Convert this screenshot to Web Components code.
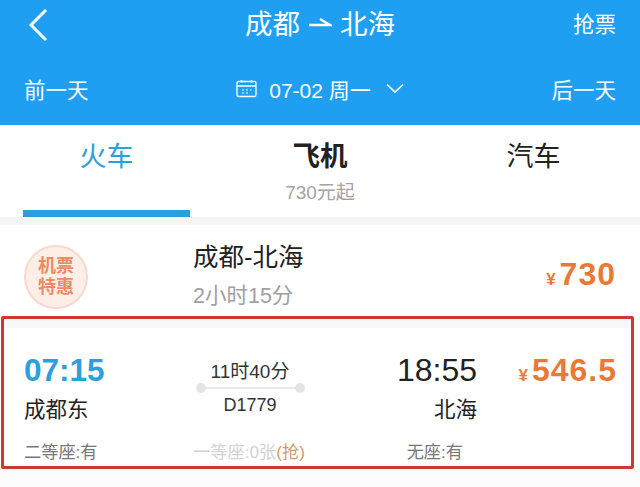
<!DOCTYPE html>
<html lang="zh">
<head>
<meta charset="utf-8">
<title>成都-北海</title>
<style>
  html, body { margin: 0; padding: 0; background: #fcfcfd; }
  body {
    width: 640px;
    height: 487px;
    overflow: hidden;
    font-family: "Liberation Sans", "Noto Sans CJK SC", sans-serif;
  }
</style>
</head>
<body>
  <app-header from="成都" to="北海" date="07-02 周一"></app-header>
  <mode-tabs></mode-tabs>
  <flight-row route="成都-北海" duration="2小时15分" price="730"></flight-row>
  <train-row></train-row>

<script>
  class AppHeader extends HTMLElement {
    constructor() {
      super();
      this.attachShadow({ mode: 'open' });
    }

    connectedCallback() {
      const from = this.getAttribute('from');
      const to = this.getAttribute('to');
      const date = this.getAttribute('date');
      this.shadowRoot.innerHTML = `
        <style>
          :host { display: block; height: 125px; background: #1f9ff1; color: #fff; }
          .top, .bottom {
            display: grid;
            grid-template-columns: 120px 1fr 120px;
            align-items: center;
            padding: 0 24px;
          }
          .top { height: 50px; }
          .bottom { height: 75px; padding-top: 11px; padding-bottom: 9px; box-sizing: border-box; }
          .title {
            display: flex;
            justify-content: center;
            align-items: center;
            gap: 8px;
            font-size: 27.5px;
            margin-bottom: 6px;
          }
          .title svg { display: block; }
          .side { font-size: 21.5px; }
          .top .side { margin-bottom: 6px; }
          .right { text-align: right; }
          .date {
            display: flex;
            justify-content: center;
            align-items: center;
            font-size: 21px;
          }
          .date svg { display: block; }
          .date span { margin: 0 15px 0 12px; white-space: nowrap; }
          .back { display: block; margin-left: 2px; }
        </style>
        <div class="top">
          <svg class="back" width="24" height="34" viewBox="0 0 24 34" fill="none" stroke="#fff" stroke-width="3">
            <path d="M20 2 L5 17 L20 32"/>
          </svg>
          <div class="title">
            <span>${from}</span>
            <svg width="24" height="12" viewBox="0 0 24 12" fill="none" stroke="#fff" stroke-width="2.4">
              <path d="M1 9 H22 L12 3"/>
            </svg>
            <span>${to}</span>
          </div>
          <div class="side right">抢票</div>
        </div>
        <div class="bottom">
          <div class="side">前一天</div>
          <div class="date">
            <svg width="21" height="19" viewBox="0 0 21 19" fill="none" stroke="#fff" stroke-width="1.3">
              <rect x="1" y="2.5" width="19" height="15" rx="1.5"/>
              <path d="M1 7 H20 M5.5 1 V3.5 M15.5 1 V3.5"/>
              <path d="M6 11 H8 M10 11 H12 M14 11 H15.5 M6 14 H8 M10 14 H12" stroke-width="1.2"/>
            </svg>
            <span>${date}</span>
            <svg width="18" height="11" viewBox="0 0 18 11" fill="none" stroke="#fff" stroke-width="1.7">
              <path d="M1 1.5 L9 9 L17 1.5"/>
            </svg>
          </div>
          <div class="side right">后一天</div>
        </div>
      `;
    }
  }

  class ModeTabs extends HTMLElement {
    constructor() {
      super();
      this.attachShadow({ mode: 'open' });
      this.shadowRoot.innerHTML = `
        <style>
          :host {
            display: grid;
            grid-template-columns: 213px 214px 213px;
            height: 92px;
            background: #fff;
            border-bottom: 8px solid #f5f5f8;
          }
          .tab {
            position: relative;
            text-align: center;
            padding-top: 12px;
            font-size: 27px;
            line-height: 40px;
            color: #222;
          }
          .tab.strong { font-weight: 700; font-size: 27.5px; }
          .tab.active { color: #2d9fdc; }
          .tab.active::after {
            content: "";
            position: absolute;
            left: 23px;
            bottom: 0;
            width: 167px;
            height: 7px;
            background: #2a9fdc;
          }
          .sub { font-size: 19px; font-weight: 400; line-height: 24px; color: #a3a3a3; margin-top: 4px; }
        </style>
        <div class="tab active">火车</div>
        <div class="tab strong">飞机<div class="sub">730元起</div></div>
        <div class="tab">汽车</div>
      `;
    }
  }

  class FlightRow extends HTMLElement {
    constructor() {
      super();
      this.attachShadow({ mode: 'open' });
    }

    connectedCallback() {
      this.shadowRoot.innerHTML = `
        <style>
          :host {
            display: grid;
            grid-template-columns: 169px 1fr auto;
            align-items: center;
            height: 91px;
            padding: 0 24px;
            background: #fff;
          }
          .badge {
            width: 64px;
            height: 64px;
            margin-top: 12px;
            box-sizing: border-box;
            border-radius: 50%;
            background: #fdeee8;
            border: 2px solid #f7d9cd;
            color: #f08a62;
            font-size: 18px;
            font-weight: 700;
            line-height: 21px;
            display: flex;
            flex-direction: column;
            align-items: center;
            justify-content: center;
          }
          .info { align-self: start; padding-top: 14px; }
          .route { font-size: 25.5px; line-height: 36px; color: #222; }
          .duration { font-size: 21.5px; line-height: 30px; color: #a0a0a0; margin-top: 6px; }
          .price { color: #e87a35; font-size: 32px; letter-spacing: 1px; font-weight: 700; margin-top: 8px; }
          .price small { font-size: 17px; margin-right: 3px; }
        </style>
        <div class="badge"><span>机票</span><span>特惠</span></div>
        <div class="info">
          <div class="route">${this.getAttribute('route')}</div>
          <div class="duration">${this.getAttribute('duration')}</div>
        </div>
        <div class="price"><small>¥</small>${this.getAttribute('price')}</div>
      `;
    }
  }

  class TrainRow extends HTMLElement {
    constructor() {
      super();
      this.attachShadow({ mode: 'open' });
      this.shadowRoot.innerHTML = `
        <style>
          :host {
            display: block;
            box-sizing: border-box;
            width: 633px;
            height: 153px;
            margin-left: 1px;
            border: 3px solid #cf3636;
            border-radius: 2px;
            background: #fff;
            position: relative;
          }
          .band { height: 9px; background: #f8f8f8; }
          .grid {
            display: grid;
            grid-template-columns: 146px 158px 149px 140px;
            padding-left: 20px;
          }
          .times { height: 62px; align-items: center; padding-top: 22px; box-sizing: border-box; }
          .time { font-size: 32px; line-height: 36px; }
          .depart { color: #2d9fdc; font-weight: 700; font-size: 31.5px; }
          .arrive { color: #222; text-align: right; }
          .price { color: #e87a35; font-size: 32px; letter-spacing: 1px; font-weight: 700; text-align: right; }
          .price small { font-size: 17px; margin-right: 3px; }
          .stations { height: 30px; align-items: center; font-size: 21.5px; color: #222; margin-top: 2px; }
          .stations .right { text-align: right; }
          .seats { margin-top: 18px; font-size: 17.2px; line-height: 24px; color: #777; }
          .seats .mid { text-align: center; color: #d2d2d2; white-space: nowrap; }
          .seats .mid b { font-weight: 400; color: #d39a6a; }
          .seats .right { text-align: right; padding-right: 14px; }
        </style>
        <div class="band"></div>
        <div class="grid times">
          <div class="time depart">07:15</div>
          <div></div>
          <div class="time arrive">18:55</div>
          <div class="price"><small>¥</small>546.5</div>
        </div>
        <div class="grid stations">
          <div>成都东</div>
          <div></div>
          <div class="right">北海</div>
          <div></div>
        </div>
        <div class="grid seats">
          <div>二等座:有</div>
          <div class="mid">一等座:0张<b>(抢)</b></div>
          <div class="right">无座:有</div>
          <div></div>
        </div>
        <train-info number="D1779" duration="11时40分"></train-info>
      `;
    }
  }

  // sits over the time row, between departure and arrival
  class TrainInfo extends HTMLElement {
    constructor() {
      super();
      this.attachShadow({ mode: 'open' });
    }

    connectedCallback() {
      this.shadowRoot.innerHTML = `
        <style>
          :host {
            display: block;
            position: absolute;
            left: 167px;
            top: 42px;
            width: 158px;
            text-align: center;
            font-size: 19px;
            line-height: 22px;
            color: #333;
          }
          .line { position: relative; height: 2px; margin: 4px 27px 5px 27px; background: #e8e8e8; }
          .line::before, .line::after {
            content: "";
            position: absolute;
            top: -4px;
            width: 10px;
            height: 10px;
            border-radius: 50%;
            background: #e4e4e4;
          }
          .line::before { left: -2px; }
          .line::after { right: -3px; }
          .number { font-size: 18px; }
        </style>
        <div>${this.getAttribute('duration')}</div>
        <div class="line"></div>
        <div class="number">${this.getAttribute('number')}</div>
      `;
    }
  }

  customElements.define('app-header', AppHeader);
  customElements.define('mode-tabs', ModeTabs);
  customElements.define('flight-row', FlightRow);
  customElements.define('train-info', TrainInfo);
  customElements.define('train-row', TrainRow);
</script>
</body>
</html>
